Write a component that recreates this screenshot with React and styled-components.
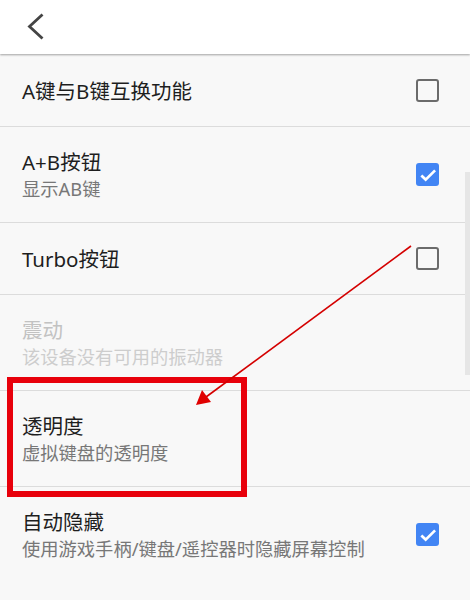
import React from "react";
import styled, { createGlobalStyle } from "styled-components";

const GlobalStyle = createGlobalStyle`
  html, body {
    margin: 0;
    padding: 0;
    background: #f8f8f8;
  }
  body {
    font-family: "Noto Sans", "Noto Sans CJK SC", sans-serif;
  }
`;

const settings = [
  { title: "A键与B键互换功能", checked: false },
  { title: "A+B按钮", sub: "显示AB键", checked: true },
  { title: "Turbo按钮", checked: false },
  { title: "震动", sub: "该设备没有可用的振动器", disabled: true },
  { title: "透明度", sub: "虚拟键盘的透明度" },
  { title: "自动隐藏", sub: "使用游戏手柄/键盘/遥控器时隐藏屏幕控制", checked: true },
];

const Checkbox = ({ checked }) =>
  checked ? (
    <Box $checked>
      <svg width="20" height="20" viewBox="0 0 24 24">
        <path d="M4 12.5l5.2 5L20.5 6.5" fill="none" stroke="#fff" strokeWidth="3.2" />
      </svg>
    </Box>
  ) : (
    <Box />
  );

const App = () => {
  return (
    <Page>
      <GlobalStyle />
      <Header>
        <BackButton>
          <svg width="20" height="28" viewBox="0 0 20 28">
            <path d="M16.5 1.5L3.5 13.5 16.5 25.5" fill="none" stroke="#444" strokeWidth="2.8" />
          </svg>
        </BackButton>
      </Header>

      <List>
        {settings.map((s) => (
          <Row key={s.title} $tall={!!s.sub}>
            <Texts>
              <Title $disabled={s.disabled}>{s.title}</Title>
              {s.sub && <Sub $disabled={s.disabled}>{s.sub}</Sub>}
            </Texts>
            {s.checked !== undefined && <Checkbox checked={s.checked} />}
          </Row>
        ))}
      </List>

      <ScrollThumb />

      <Annotation width="470" height="600" viewBox="0 0 470 600">
        <rect x="10" y="380" width="234" height="114" fill="none" stroke="#e8000b" strokeWidth="6" />
        <line x1="411" y1="246" x2="206" y2="397" stroke="#d40000" strokeWidth="1.6" />
        <polygon points="196,405 202,390 211,402" fill="#e00000" />
      </Annotation>
    </Page>
  );
};

const Page = styled.div`
  position: relative;
  width: 470px;
  min-height: 600px;
  background: #f8f8f8;
  overflow: hidden;
`;

const Header = styled.header`
  height: 54px;
  background: #fff;
  display: flex;
  align-items: center;
  padding-left: 26px;
  box-shadow: 0 1px 2px rgba(0, 0, 0, 0.35);
  position: relative;
  z-index: 1;
  margin-bottom: 1px;
`;

const BackButton = styled.div`
  display: flex;
  align-items: center;
  height: 28px;
`;

const List = styled.div`
  display: flex;
  flex-direction: column;
`;

const Row = styled.div`
  height: ${(p) => (p.$tall ? "95px" : "71px")};
  border-bottom: 1px solid #dcdcdc;
  display: flex;
  align-items: center;
  justify-content: space-between;
  padding: 0 31px 0 22px;

  &:last-child {
    border-bottom: none;
  }
`;

const Texts = styled.div`
  display: flex;
  flex-direction: column;
`;

const Title = styled.div`
  font-size: 20.5px;
  line-height: 28px;
  color: ${(p) => (p.$disabled ? "#c2c2c2" : "#1e1e1e")};
`;

const Sub = styled.div`
  font-size: 18.3px;
  line-height: 26px;
  color: ${(p) => (p.$disabled ? "#cdcdcd" : "#777")};
`;

const Box = styled.div`
  width: 23px;
  height: 23px;
  box-sizing: border-box;
  border-radius: 3px;
  border: ${(p) => (p.$checked ? "none" : "2.5px solid #6b6b6b")};
  background: ${(p) => (p.$checked ? "#4285f4" : "transparent")};
  display: flex;
  align-items: center;
  justify-content: center;
`;

const ScrollThumb = styled.div`
  position: absolute;
  right: 0;
  top: 172px;
  width: 5px;
  height: 203px;
  background: #e6e6e6;
`;

const Annotation = styled.svg`
  position: absolute;
  left: 0;
  top: 0;
  pointer-events: none;
`;

export default App;
